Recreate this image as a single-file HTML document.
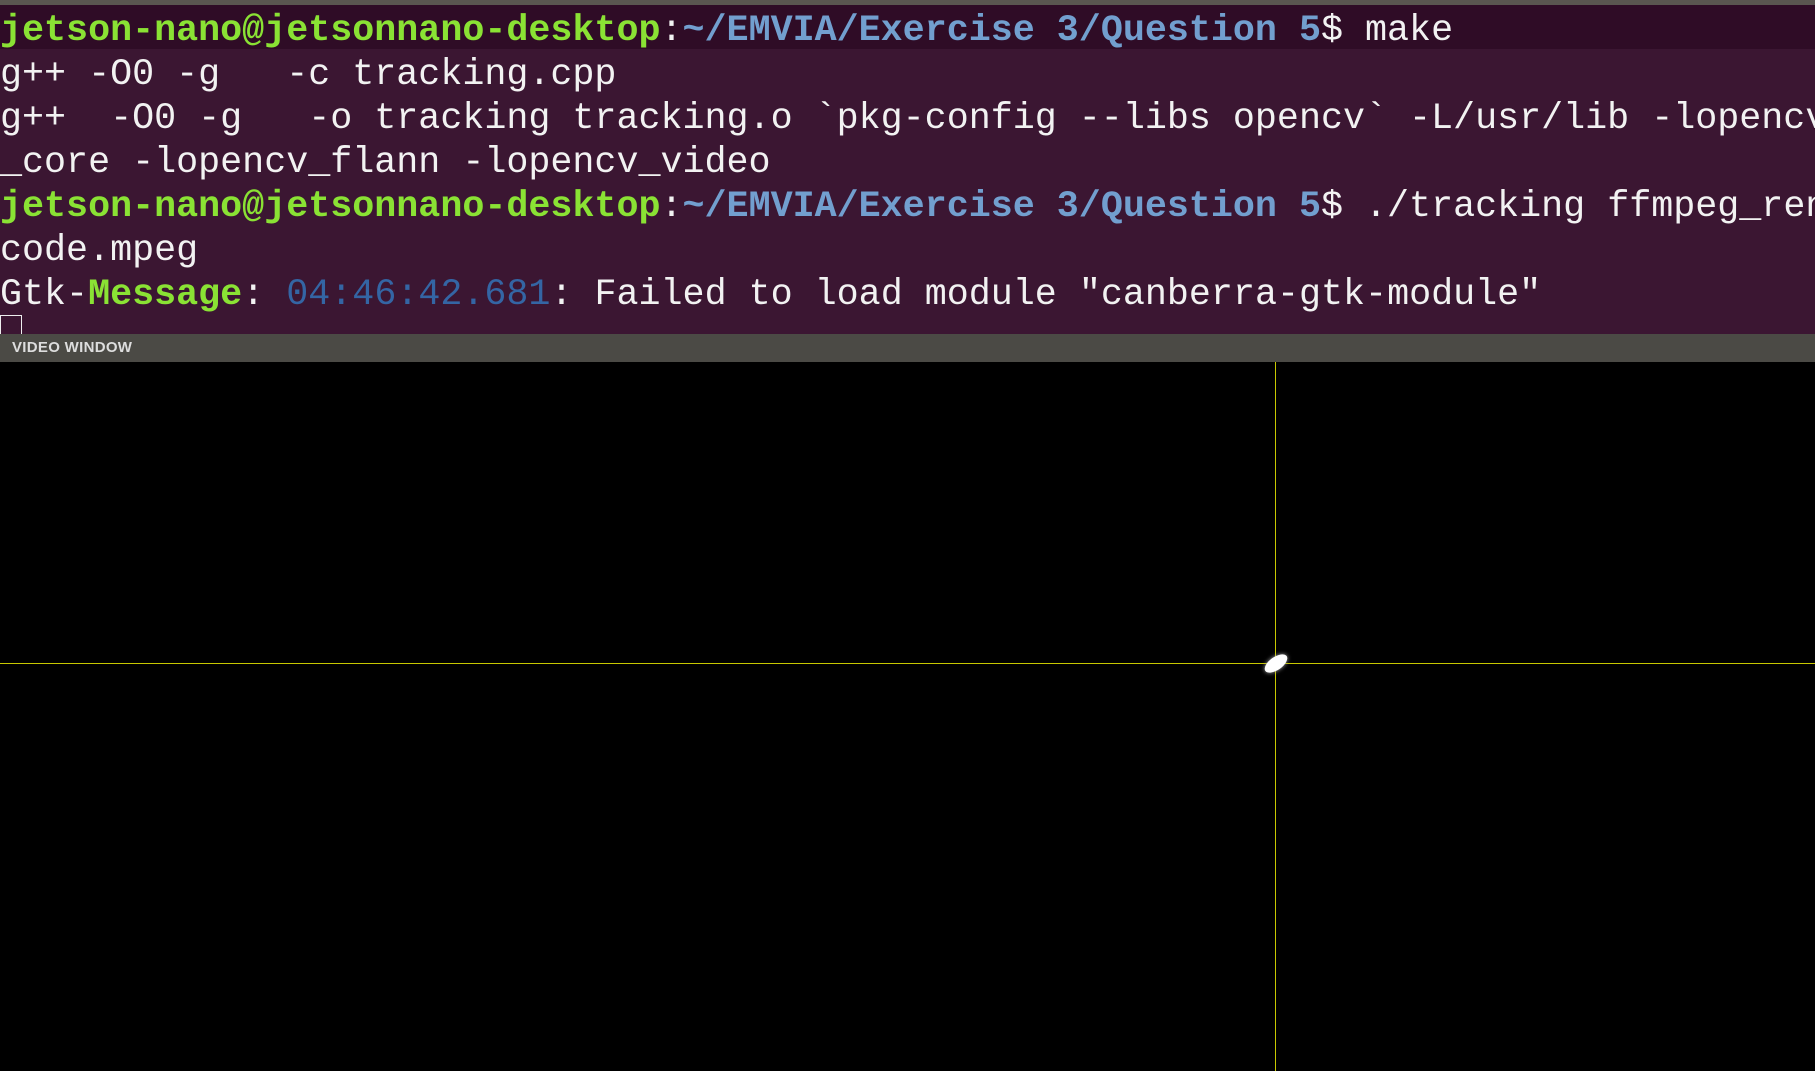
<!DOCTYPE html>
<html><head><meta charset="utf-8"><style>
html,body{margin:0;padding:0;width:1815px;height:1071px;overflow:hidden;background:#000;}
#term{position:absolute;left:0;top:0;width:1815px;height:334px;background:#3b1632;overflow:hidden;}
#topbar{position:absolute;left:0;top:0;width:1815px;height:5px;background:#5a5650;}
#band{position:absolute;left:0;top:5px;width:1815px;height:44px;background:#2f0c26;}
pre{position:absolute;left:0;top:9px;margin:0;font-family:"Liberation Mono",monospace;font-size:36.7px;line-height:44px;color:#f2f2f2;white-space:pre;}
.g{color:#8ae234;font-weight:bold}.b{color:#729fcf;font-weight:bold}.t{color:#3465a4}
#cur{position:absolute;left:0;top:315px;width:22px;height:24px;border:1px solid #eee;box-sizing:border-box;}
#title{position:absolute;left:0;top:334px;width:1815px;height:28px;background:#4b4a45;font-family:"Liberation Sans",sans-serif;font-weight:bold;font-size:15px;letter-spacing:0.3px;color:#ddd;line-height:28px;padding-left:12px;box-sizing:border-box;}
#vid{position:absolute;left:0;top:362px;width:1815px;height:709px;background:#000;}
.v{position:absolute;left:1275px;top:362px;width:1px;height:709px;background:#c8c800;}
.h{position:absolute;left:0;top:663px;width:1815px;height:1px;background:#c8c800;}
.blob{position:absolute;left:1263px;top:657px;width:26px;height:13px;border-radius:50%;background:#fff;transform:rotate(-35deg);box-shadow:0 0 4px #aaa;}
</style></head><body>
<div id="term"><div id="topbar"></div><div id="band"></div>
<pre><span class="g">jetson-nano@jetsonnano-desktop</span>:<span class="b">~/EMVIA/Exercise 3/Question 5</span>$ make
g++ -O0 -g   -c tracking.cpp
g++  -O0 -g   -o tracking tracking.o `pkg-config --libs opencv` -L/usr/lib -lopencv
_core -lopencv_flann -lopencv_video
<span class="g">jetson-nano@jetsonnano-desktop</span>:<span class="b">~/EMVIA/Exercise 3/Question 5</span>$ ./tracking ffmpeg_ren
code.mpeg
Gtk-<span class="g">Message</span>: <span class="t">04:46:42.681</span>: Failed to load module "canberra-gtk-module"</pre>
<div id="cur"></div></div>
<div id="title">VIDEO WINDOW</div>
<div id="vid"></div><div class="v"></div><div class="h"></div><div class="blob"></div>
</body></html>
